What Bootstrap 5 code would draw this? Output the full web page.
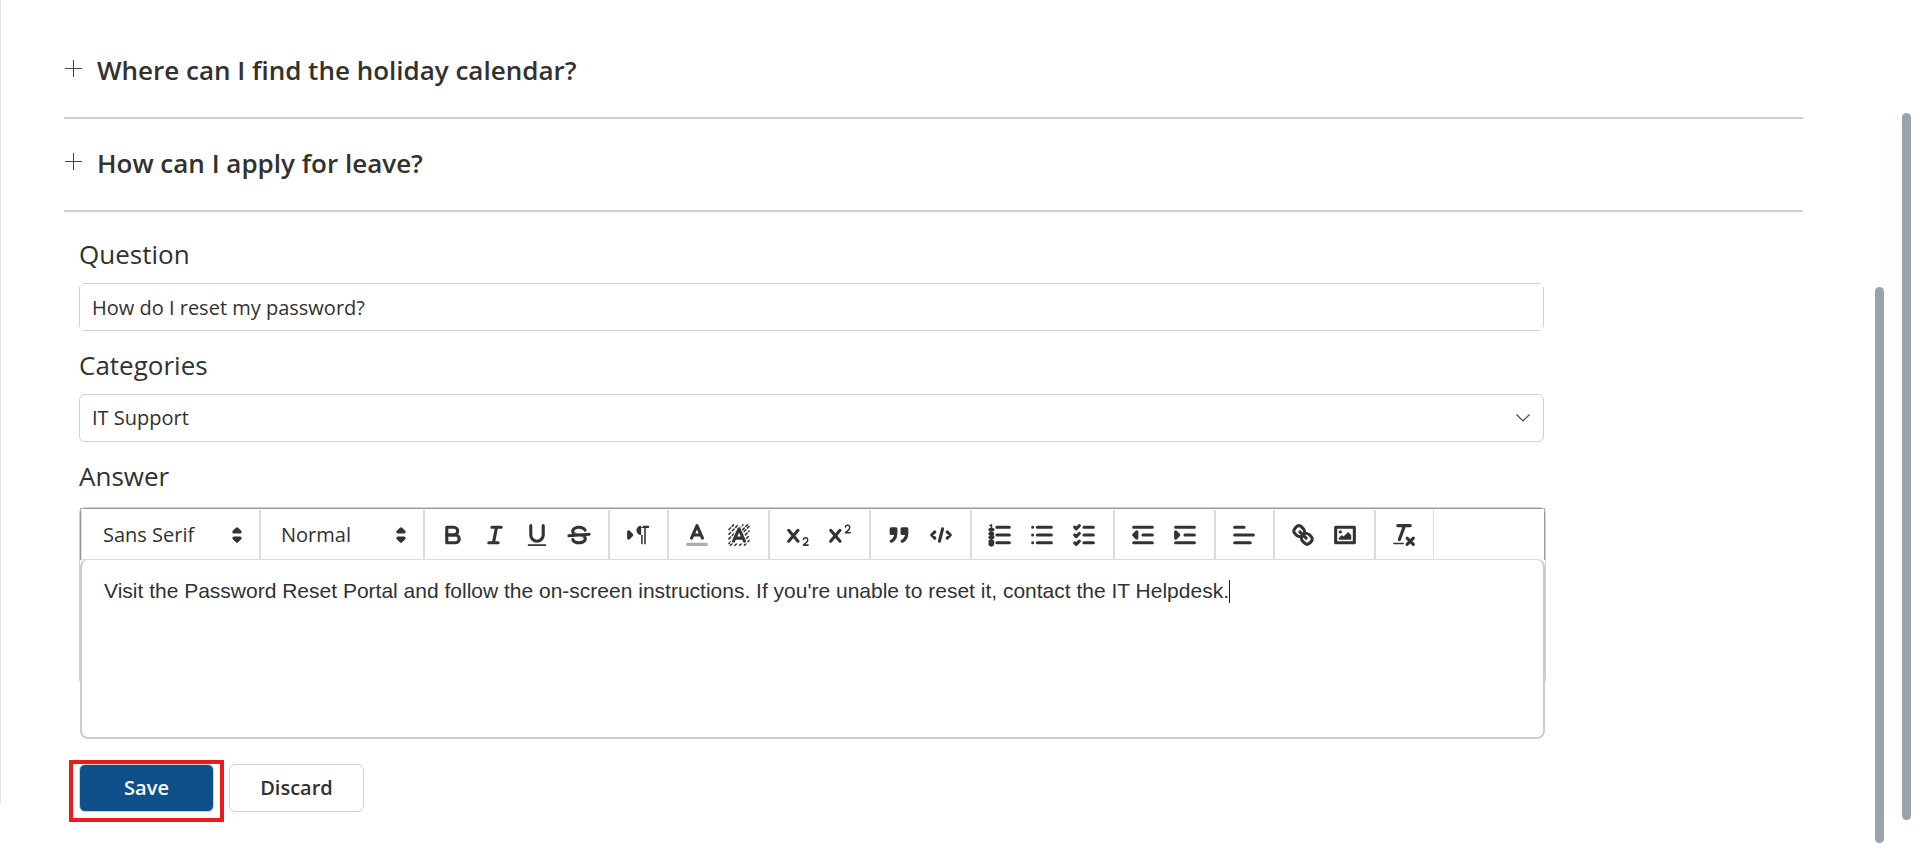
<!DOCTYPE html>
<html lang="en">
<head>
<meta charset="utf-8">
<meta name="viewport" content="width=device-width, initial-scale=1">
<title>Edit FAQ</title>
<link href="https://cdn.jsdelivr.net/npm/bootstrap@5.3.0/dist/css/bootstrap.min.css" rel="stylesheet">
<style>
  :root { --ink: #323130; --line: #d1d1d1; --tool-line: #dcdcdc; --rail: #98a3ab; --brand: #0f4f8a; }
  body { font-family: "Open Sans", sans-serif; color: var(--ink); background: #fff; }
  .page-shell { padding-right: 7px; }
  .faq-main { padding: 26px 72px 0 64px; }
  .faq-main::before { content: ""; position: absolute; left: 0; top: 0; bottom: 55px; width: 1px; background: #e6e6e6; }
  .rail { width: 9px; border-radius: 5px; background: var(--rail); }
  .rail-inner { margin: 287px 18px 16px 0; }
  .rail-outer { margin: 113px 0 39px; }

  .faq-row { border-bottom: 2px solid #cfcfcf; }
  .faq-toggle { height: 91px; padding: 0 0 4px 1px; gap: 15px; font-size: 26px; line-height: 36px; font-weight: 600; color: var(--ink); background: none; border: 0; text-align: left; }
  .faq-toggle svg { width: 17px; height: 17px; margin-bottom: 3px; }

  .faq-form { width: 85%; padding-top: 25px; }
  .form-indent { padding-left: 15px; }
  .field-label { display: block; font-size: 26px; line-height: 34px; margin-bottom: 12px; }
  .field-gap { margin-bottom: 17px; }
  .field-box { height: 48px; padding: 0 12px; font-size: 20px; line-height: 28px; color: var(--ink); border: 1px solid var(--line); border-radius: 6px; box-shadow: none; }
  .field-open { border: 0; border-radius: 0; padding: 0 13px;
    background:
      linear-gradient(var(--line), var(--line)) center top / calc(100% - 8px) 1px no-repeat,
      linear-gradient(var(--line), var(--line)) center bottom / calc(100% - 8px) 1px no-repeat,
      linear-gradient(var(--line), var(--line)) left center / 1px calc(100% - 8px) no-repeat,
      linear-gradient(var(--line), var(--line)) right center / 1px calc(100% - 8px) no-repeat; }
  .field-select { background: #fff url("data:image/svg+xml,%3Csvg xmlns='http://www.w3.org/2000/svg' width='14' height='8' viewBox='0 0 14 8'%3E%3Cpath d='M.5.5 7 7 13.5.5' fill='none' stroke='%23484644' stroke-width='1.2'/%3E%3C/svg%3E") no-repeat right 13px center / 14px 8px; appearance: none; }

  .editor { margin: 14px -2px 0 0; padding: 1px 1px 0; }
  .editor::before { content: ""; position: absolute; inset: 0 0 54px; border: 1px solid var(--line); border-radius: 6px; pointer-events: none; }
  .editor-tools { border: 1px solid #999; border-bottom: 0; padding-top: 1px; }
  .tool-group { height: 50px; padding: 0 8px; border: solid var(--tool-line); border-width: 0 1px 1px; margin-right: -1px; box-shadow: 1px 0 0 var(--tool-line); }
  .tool-group + .tool-group { margin-left: 1px; border-left: 0; }
  .tool-group:last-child { box-shadow: none; }
  .tool-btn { width: 42px; height: 36px; padding: 0; border: 0; background: none; display: flex; align-items: center; justify-content: center; }
  .tool-btn svg { width: 28px; height: 28px; }
  .st { fill: none; stroke: #333; stroke-width: 2; stroke-linecap: round; stroke-linejoin: round; }
  .fl { fill: #333; }
  .both { fill: #333; stroke: #333; stroke-width: 2; stroke-linecap: round; stroke-linejoin: round; }
  .tool-pick { height: 36px; border: 0; color: var(--ink); font-size: 20px; line-height: 28px; padding: 0 28px 0 13px; appearance: none;
    background: url("data:image/svg+xml,%3Csvg xmlns='http://www.w3.org/2000/svg' viewBox='0 0 18 18'%3E%3Cg fill='%23333' stroke='%23333' stroke-width='2' stroke-linecap='round' stroke-linejoin='round'%3E%3Cpath d='M7 11 9 13 11 11ZM7 7 9 5 11 7Z'/%3E%3C/g%3E%3C/svg%3E") no-repeat right center / 28px 28px; }
  .pick-font { width: 161px; }
  .pick-size { width: 147px; }
  .editor-text { min-height: 180px; margin-top: -1px; padding: 17px 22px; font-family: "Liberation Sans", Arial, sans-serif; font-size: 21px; line-height: 28px; background: #fff; border: 1px solid #ccc; border-width: 1px 2px 2px; border-top-color: var(--tool-line); border-radius: 8px; outline: 0; }
  .text-caret { display: inline-block; width: 1px; height: 23px; background: #222; vertical-align: -5px; }

  .form-actions { margin-top: 25px; gap: 15px; }
  .act-btn { width: 135px; height: 48px; padding: 0; font-size: 20px; line-height: 28px; font-weight: 600; border-radius: 6px; }
  .act-save { color: #fff; background: var(--brand); border: 1px solid var(--line); }
  .act-drop { color: var(--ink); background: #fff; border: 1px solid var(--line); }
  .save-mark::after { content: ""; position: absolute; inset: -4px -10px -10px; border: 4px solid #e81c1c; pointer-events: none; }
</style>
</head>
<body>
<div class="page-shell d-flex min-vh-100">
  <main class="faq-main flex-grow-1 position-relative">
    <section>
      <div class="faq-row">
        <button type="button" class="faq-toggle d-flex align-items-center w-100" aria-expanded="false">
          <svg viewBox="0 0 17 17" aria-hidden="true"><path d="M0 8.5H17M8.5 0V17" fill="none" stroke="#484644"/></svg>
          <span>Where can I find the holiday calendar?</span>
        </button>
      </div>
      <div class="faq-row">
        <button type="button" class="faq-toggle d-flex align-items-center w-100" aria-expanded="false">
          <svg viewBox="0 0 17 17" aria-hidden="true"><path d="M0 8.5H17M8.5 0V17" fill="none" stroke="#484644"/></svg>
          <span>How can I apply for leave?</span>
        </button>
      </div>
    </section>

    <div class="form-indent">
    <form class="faq-form">
      <div class="field-gap">
        <label class="field-label" for="question">Question</label>
        <input id="question" type="text" class="form-control field-box field-open" value="How do I reset my password?">
      </div>
      <div class="field-gap">
        <label class="field-label" for="category">Categories</label>
        <select id="category" class="form-select field-box field-select"><option>IT Support</option></select>
      </div>
      <div>
        <span class="field-label" id="answer-label">Answer</span>
        <div class="editor position-relative">
          <div class="editor-tools d-flex flex-wrap" role="toolbar" aria-label="Formatting">
            <div class="tool-group d-flex align-items-center"><select class="tool-pick pick-font" aria-label="Font"><option>Sans Serif</option></select></div>
            <div class="tool-group d-flex align-items-center"><select class="tool-pick pick-size" aria-label="Size"><option>Normal</option></select></div>
            <div class="tool-group d-flex align-items-center">
              <button type="button" class="tool-btn" aria-label="Bold"><svg viewBox="0 0 18 18"><path class="st" d="M5,4H9.5A2.5,2.5,0,0,1,12,6.5v0A2.5,2.5,0,0,1,9.5,9H5V4Z"/><path class="st" d="M5,9h5.5A2.5,2.5,0,0,1,13,11.5v0A2.5,2.5,0,0,1,10.5,14H5V9Z"/></svg></button>
              <button type="button" class="tool-btn" aria-label="Italic"><svg viewBox="0 0 18 18"><path class="st" d="M7 4H13M5 14H11M8 14 10 4"/></svg></button>
              <button type="button" class="tool-btn" aria-label="Underline"><svg viewBox="0 0 18 18"><path class="st" d="M5,3V9a4.012,4.012,0,0,0,4,4H9a4.012,4.012,0,0,0,4-4V3"/><rect class="fl" height="1" rx=".5" width="12" x="3" y="15"/></svg></button>
              <button type="button" class="tool-btn" aria-label="Strike"><svg viewBox="0 0 18 18"><path class="st" d="M15.5 8.5 2.5 9.5"/><path class="fl" d="M9.007,8C6.542,7.791,6,7.519,6,6.5,6,5.792,7.283,5,9,5c1.571,0,2.765.679,2.969,1.309a1,1,0,0,0,1.9-.617C13.356,4.106,11.354,3,9,3,6.2,3,4,4.538,4,6.5a3.2,3.2,0,0,0,.5,1.843Z"/><path class="fl" d="M8.984,10C11.457,10.208,12,10.479,12,11.5c0,0.708-1.283,1.5-3,1.5-1.571,0-2.765-.679-2.969-1.309a1,1,0,1,0-1.9.617C4.644,13.894,6.646,15,9,15c2.8,0,5-1.538,5-3.5a3.2,3.2,0,0,0-.5-1.843Z"/></svg></button>
            </div>
            <div class="tool-group d-flex align-items-center">
              <button type="button" class="tool-btn" aria-label="Direction"><svg viewBox="0 0 18 18"><path class="both" d="M3 11 5 9 3 7Z"/><path class="fl" d="M11,3a3,3,0,0,0,0,6h1V3H11ZM11 3h4.500a.5.5 0 0 1 0 1.500H11ZM11 4h1v11h-1ZM13 4h1v11h-1Z"/></svg></button>
            </div>
            <div class="tool-group d-flex align-items-center">
              <button type="button" class="tool-btn" aria-label="Text colour"><svg viewBox="0 0 18 18"><path class="st" opacity=".4" d="M3 15H15"/><path class="st" d="M5.5 11 9 3 12.5 11M11.63 9H6.38"/></svg></button>
              <button type="button" class="tool-btn" aria-label="Background colour"><svg viewBox="0 0 18 18"><g fill="none" stroke="#333" stroke-width="1" stroke-linecap="round" stroke-dasharray="1.6 1.5"><path d="M2.5 5.5 5.5 2.5M2.5 8.5 8.5 2.5M2.5 11.5 11.5 2.5M2.5 14.5 14.5 2.5M3.5 15.5 15.5 3.5M6.5 15.5 15.5 6.5M9.5 15.5 15.5 9.5M12.5 15.5 15.5 12.5"/></g><path d="M5.5 13 9 5 12.5 13Z" fill="#fff" stroke="#fff" stroke-width="3"/><path class="st" d="M5.5 13 9 5 12.5 13M11.63 11H6.38"/></svg></button>
            </div>
            <div class="tool-group d-flex align-items-center">
              <button type="button" class="tool-btn" aria-label="Subscript"><svg viewBox="0 0 18 18"><path class="fl" d="M15.5,15H13.861a3.858,3.858,0,0,0,1.914-2.975,1.8,1.8,0,0,0-1.6-1.751A1.921,1.921,0,0,0,12.021,11.7a0.5,0.5,0,1,0,.957.291h0a0.914,0.914,0,0,1,1.053-.725,0.81,0.81,0,0,1,.744.762c0,1.076-1.17,1.87-1.94,2.431A1.456,1.456,0,0,0,12,15.5a0.5,0.5,0,0,0,.5.5h3A0.5,0.5,0,0,0,15.5,15Z"/><path class="st" d="M3 6 9 13M9 6 3 13"/></svg></button>
              <button type="button" class="tool-btn" aria-label="Superscript"><svg viewBox="0 0 18 18"><path class="fl" d="M15.5,7H13.861a4.015,4.015,0,0,0,1.914-2.975,1.8,1.8,0,0,0-1.6-1.751A1.922,1.922,0,0,0,12.021,3.7a0.5,0.5,0,1,0,.957.291,0.917,0.917,0,0,1,1.053-.725,0.81,0.81,0,0,1,.744.762c0,1.077-1.164,1.925-1.934,2.486A1.423,1.423,0,0,0,12,7.5a0.5,0.5,0,0,0,.5.5h3A0.5,0.5,0,0,0,15.5,7Z"/><path class="st" d="M3 6 9 13M9 6 3 13"/></svg></button>
            </div>
            <div class="tool-group d-flex align-items-center">
              <button type="button" class="tool-btn" aria-label="Quote"><svg viewBox="0 0 18 18"><path class="both" d="M4 5h3v3H4ZM11 5h3v3h-3ZM7,8c0,4.031-3,5-3,5M14,8c0,4.031-3,5-3,5"/></svg></button>
              <button type="button" class="tool-btn" aria-label="Code"><svg viewBox="0 0 18 18"><path class="st" d="M5 7 3 9 5 11M13 7 15 9 13 11M10 5 8 13"/></svg></button>
            </div>
            <div class="tool-group d-flex align-items-center">
              <button type="button" class="tool-btn" aria-label="Numbered list"><svg viewBox="0 0 18 18"><path class="st" d="M7 4H15M7 9H15M7 14H15M2.5 5.5H4.5"/><path class="fl" d="M3.5,6A0.5,0.5,0,0,1,3,5.5V3.085l-0.276.138A0.5,0.5,0,0,1,2.053,3c-0.124-.247-0.023-0.324.224-0.447l1-.5A0.5,0.5,0,0,1,4,2.5v3A0.5,0.5,0,0,1,3.5,6Z"/><path class="st" d="M4.5,10.5h-2c0-.234,1.85-1.076,1.85-2.234A0.959,0.959,0,0,0,2.5,8.156M2.5,14.846a0.959,0.959,0,0,0,1.85-.109A0.7,0.7,0,0,0,3.75,14a0.688,0.688,0,0,0,.6-0.736,0.959,0.959,0,0,0-1.85-.109"/></svg></button>
              <button type="button" class="tool-btn" aria-label="Bulleted list"><svg viewBox="0 0 18 18"><path class="st" d="M6 4H15M6 9H15M6 14H15M3 4H3M3 9H3M3 14H3"/></svg></button>
              <button type="button" class="tool-btn" aria-label="Check list"><svg viewBox="0 0 18 18"><path class="st" d="M9 4H15M9 9H15M9 14H15M3 4 4 5 6 3M3 9 4 10 6 8M3 14 4 15 6 13"/></svg></button>
            </div>
            <div class="tool-group d-flex align-items-center">
              <button type="button" class="tool-btn" aria-label="Outdent"><svg viewBox="0 0 18 18"><path class="st" d="M3 14H15M3 4H15M9 9H15"/><path class="both" d="M5 7V11L3 9Z"/></svg></button>
              <button type="button" class="tool-btn" aria-label="Indent"><svg viewBox="0 0 18 18"><path class="st" d="M3 14H15M3 4H15M9 9H15"/><path class="both" d="M3 7V11L5 9Z"/></svg></button>
            </div>
            <div class="tool-group d-flex align-items-center">
              <button type="button" class="tool-btn" aria-label="Align"><svg viewBox="0 0 18 18"><path class="st" d="M3 9H15M3 14H13M3 4H9"/></svg></button>
            </div>
            <div class="tool-group d-flex align-items-center">
              <button type="button" class="tool-btn" aria-label="Link"><svg viewBox="0 0 18 18"><path class="st" d="M7 7 11 11M8.9,4.577a3.476,3.476,0,0,1,.36,4.679A3.476,3.476,0,0,1,4.577,8.9C3.185,7.5,2.035,6.4,4.217,4.217S7.5,3.185,8.9,4.577ZM13.423,9.1a3.476,3.476,0,0,0-4.679-.36,3.476,3.476,0,0,0,.36,4.679c1.392,1.392,2.5,2.542,4.679.36S14.815,10.5,13.423,9.1Z"/></svg></button>
              <button type="button" class="tool-btn" aria-label="Image"><svg viewBox="0 0 18 18"><path class="st" d="M3 4h12v10H3Z" /><circle class="fl" cx="6" cy="7" r="1"/><path class="fl" d="M5 12V11L7 9 8 10 11 7 13 9V12Z"/></svg></button>
            </div>
            <div class="tool-group d-flex align-items-center">
              <button type="button" class="tool-btn" aria-label="Clear formatting"><svg viewBox="0 0 18 18"><path class="st" d="M5 3H13M6 12 9.35 3M11 11 15 15M15 11 11 15"/><rect class="fl" height="1" rx=".5" width="7" x="2" y="14"/></svg></button>
            </div>
          </div>
          <div class="editor-text position-relative" contenteditable="true" role="textbox" aria-multiline="true" aria-labelledby="answer-label" spellcheck="false">Visit the Password Reset Portal and follow the on-screen instructions. If you're unable to reset it, contact the IT Helpdesk.<span class="text-caret"></span></div>
        </div>
      </div>
      <div class="form-actions d-flex">
        <div class="save-mark position-relative"><button type="button" class="btn act-btn act-save">Save</button></div>
        <button type="button" class="btn act-btn act-drop">Discard</button>
      </div>
    </form>
    </div>
  </main>
  <div class="rail rail-inner" aria-hidden="true"></div>
  <div class="rail rail-outer" aria-hidden="true"></div>
</div>
<script src="https://cdn.jsdelivr.net/npm/bootstrap@5.3.0/dist/js/bootstrap.bundle.min.js"></script>
</body>
</html>
